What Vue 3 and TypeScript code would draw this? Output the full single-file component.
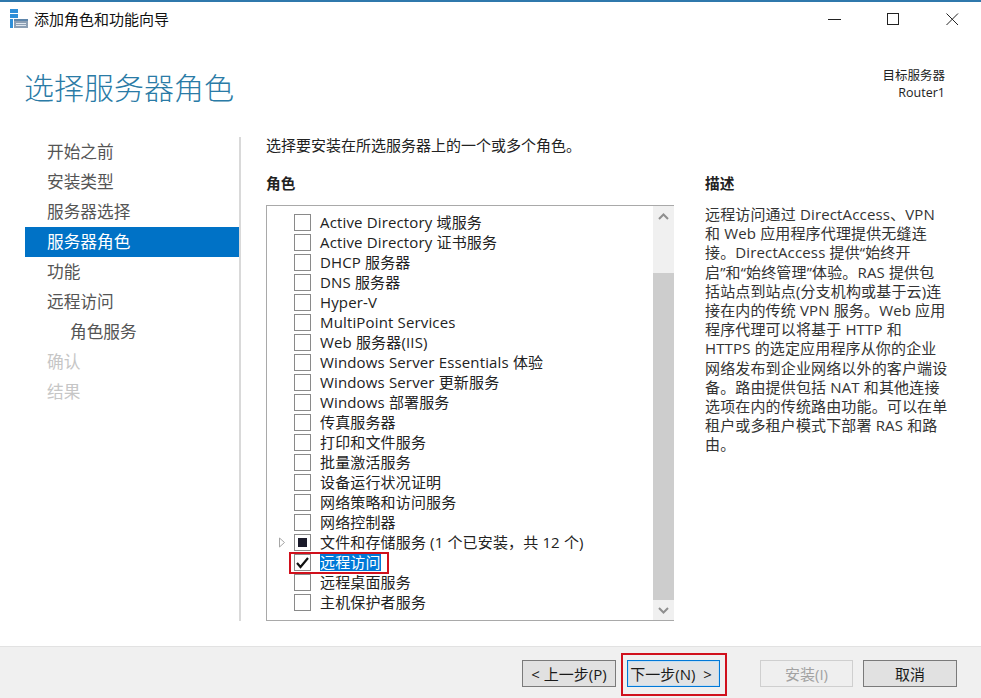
<script setup lang="ts">
interface Role { label: string; mark?: 'square' | 'check'; expand?: boolean; selected?: boolean }
const roles: Role[] = [
  { label: 'Active Directory 域服务' },
  { label: 'Active Directory 证书服务' },
  { label: 'DHCP 服务器' },
  { label: 'DNS 服务器' },
  { label: 'Hyper-V' },
  { label: 'MultiPoint Services' },
  { label: 'Web 服务器(IIS)' },
  { label: 'Windows Server Essentials 体验' },
  { label: 'Windows Server 更新服务' },
  { label: 'Windows 部署服务' },
  { label: '传真服务器' },
  { label: '打印和文件服务' },
  { label: '批量激活服务' },
  { label: '设备运行状况证明' },
  { label: '网络策略和访问服务' },
  { label: '网络控制器' },
  { label: '文件和存储服务 (1 个已安装，共 12 个)', mark: 'square', expand: true },
  { label: '远程访问', mark: 'check', selected: true },
  { label: '远程桌面服务' },
  { label: '主机保护者服务' },
]
const steps = [
  { label: '开始之前' },
  { label: '安装类型' },
  { label: '服务器选择' },
  { label: '服务器角色', active: true },
  { label: '功能' },
  { label: '远程访问' },
  { label: '角色服务', sub: true },
  { label: '确认', disabled: true },
  { label: '结果', disabled: true },
]
const description = [
  '远程访问通过 DirectAccess、VPN',
  '和 Web 应用程序代理提供无缝连',
  '接。DirectAccess 提供“始终开',
  '启”和“始终管理”体验。RAS 提供包',
  '括站点到站点(分支机构或基于云)连',
  '接在内的传统 VPN 服务。Web 应用',
  '程序代理可以将基于 HTTP 和',
  'HTTPS 的选定应用程序从你的企业',
  '网络发布到企业网络以外的客户端设',
  '备。路由提供包括 NAT 和其他连接',
  '选项在内的传统路由功能。可以在单',
  '租户或多租户模式下部署 RAS 和路',
  '由。',
]
</script>

<template>
  <div class="window">
    <div class="titlebar">
      <svg class="app-icon" width="20" height="20" viewBox="0 0 20 20">
        <rect x="1" y="0" width="8" height="4" fill="#2f8fd8" />
        <rect x="1" y="5" width="8" height="4" fill="#2f8fd8" />
        <rect x="1" y="10" width="3" height="9" fill="#2f8fd8" />
        <rect x="5" y="12" width="14" height="7" fill="#8c9fb4" />
        <rect x="5" y="10" width="14" height="2" fill="#5f86ab" />
        <rect x="7" y="14" width="10" height="1" fill="#dfe6ee" />
        <rect x="7" y="16" width="10" height="1" fill="#dfe6ee" />
      </svg>
      <span class="window-title">添加角色和功能向导</span>
      <div class="window-controls">
        <svg width="13" height="13" viewBox="0 0 13 13"><path d="M0 6.5H13" stroke="#222" fill="none" /></svg>
        <svg width="13" height="13" viewBox="0 0 13 13"><rect x="0.5" y="0.5" width="11" height="11" stroke="#222" fill="none" /></svg>
        <svg width="13" height="13" viewBox="0 0 13 13"><path d="M0.5 0.5L12 12M12 0.5L0.5 12" stroke="#222" fill="none" /></svg>
      </div>
    </div>

    <header class="header">
      <h1 class="page-title">选择服务器角色</h1>
      <div class="target">
        <div>目标服务器</div>
        <div>Router1</div>
      </div>
    </header>

    <main class="main">
      <nav class="nav">
        <div
          v-for="s in steps"
          :key="s.label + (s.sub ? 'sub' : '')"
          class="step"
          :class="{ active: s.active, sub: s.sub, disabled: s.disabled }"
        >{{ s.label }}</div>
      </nav>

      <section class="content">
        <p class="intro">选择要安装在所选服务器上的一个或多个角色。</p>
        <div class="columns">
          <div class="roles-col">
            <h2 class="col-heading">角色</h2>
            <div class="listbox">
              <div class="rows">
                <div v-for="r in roles" :key="r.label" class="row">
                  <span class="expander">
                    <svg v-if="r.expand" width="8" height="11" viewBox="0 0 8 11"><path d="M1.5 1L6.5 5.5L1.5 10Z" fill="#fff" stroke="#a6a6a6" /></svg>
                  </span>
                  <span class="box">
                    <span v-if="r.mark === 'square'" class="square"></span>
                    <svg v-if="r.mark === 'check'" width="15" height="13" viewBox="0 0 15 13"><path d="M2 7L5.5 11L13 2" fill="none" stroke="#111" stroke-width="2.2" /></svg>
                  </span>
                  <span class="role-label" :class="{ selected: r.selected }">{{ r.label }}</span>
                  <span v-if="r.selected" class="red-row"></span>
                </div>
              </div>
              <div class="scrollbar">
                <div class="scroll-top">
                  <svg width="11" height="7" viewBox="0 0 11 7"><path d="M1 6L5.5 1.5L10 6" fill="none" stroke="#8f8f8f" stroke-width="2" /></svg>
                </div>
                <div class="thumb"></div>
                <div class="scroll-bottom">
                  <svg width="11" height="7" viewBox="0 0 11 7"><path d="M1 1L5.5 5.5L10 1" fill="none" stroke="#8f8f8f" stroke-width="2" /></svg>
                </div>
              </div>
            </div>
          </div>
          <aside class="desc-col">
            <h2 class="col-heading">描述</h2>
            <div class="desc">
              <div v-for="line in description" :key="line">{{ line }}</div>
            </div>
          </aside>
        </div>
      </section>
    </main>

    <footer class="footer">
      <button class="btn">&lt; 上一步(P)</button>
      <button class="btn next">下一步(N) &nbsp;&gt;<span class="red-btn"></span></button>
      <button class="btn off">安装(I)</button>
      <button class="btn cancel">取消</button>
    </footer>
  </div>
</template>

<style>
html, body { margin: 0; background: #fff; }
</style>

<style scoped>
.window {
  width: 981px;
  height: 698px;
  display: flex;
  flex-direction: column;
  box-sizing: border-box;
  border-top: 2px solid #2f78ac;
  background: #fff;
  overflow: hidden;
  font-family: "Open Sans", "Noto Sans CJK SC", sans-serif;
  color: #1f1f1f;
}
.titlebar {
  height: 34px;
  flex: none;
  display: flex;
  align-items: center;
  padding-left: 9px;
  box-sizing: border-box;
  padding-bottom: 1px;
}
.app-icon { margin-right: 5px; flex: none; }
.window-title { font-size: 15px; color: #111; }
.window-controls {
  margin-left: auto;
  display: flex;
  gap: 46px;
  padding-right: 22px;
  padding-top: 1px;
  align-items: center;
}
.header {
  height: 101px;
  flex: none;
  display: flex;
  justify-content: space-between;
  padding: 0 36px 0 24px;
  box-sizing: border-box;
}
.page-title {
  margin: 29px 0 0;
  font-size: 30px;
  font-weight: 300;
  line-height: 46px;
  color: #2a7ba6;
}
.target {
  margin-top: 31px;
  font-size: 12.5px;
  line-height: 17px;
  text-align: right;
  color: #222;
}
.main {
  height: 484px;
  flex: none;
  display: flex;
}
.nav {
  width: 216px;
  margin-left: 25px;
  box-sizing: border-box;
  border-right: 2px solid #d9d9d9;
}
.step {
  height: 30px;
  line-height: 30px;
  font-size: 16.7px;
  padding-left: 22px;
  color: #555;
}
.step.active {
  background: #0072c6;
  color: #fff;
}
.step.sub { padding-left: 45px; }
.step.disabled { color: #c6c6c6; }
.content {
  flex: 1;
  padding-left: 25px;
  min-width: 0;
}
.intro {
  margin: 0;
  font-size: 15px;
  line-height: 16px;
  color: #222;
}
.columns {
  display: flex;
  gap: 31px;
  margin-top: 20px;
}
.roles-col { width: 408px; flex: none; }
.col-heading {
  margin: 0;
  font-size: 14.67px;
  font-weight: 700;
  line-height: 20px;
  color: #222;
}
.listbox {
  margin-top: 12px;
  height: 416px;
  box-sizing: border-box;
  border: 1px solid #a9a9a9;
  border-right: none;
  display: flex;
}
.rows {
  flex: 1;
  padding-top: 6px;
}
.row {
  position: relative;
  height: 20px;
  display: flex;
  align-items: center;
  font-size: 15px;
  letter-spacing: 0.15px;
}
.expander {
  width: 27px;
  padding-left: 11px;
  box-sizing: border-box;
  display: flex;
  flex: none;
}
.box {
  width: 17px;
  height: 17px;
  box-sizing: border-box;
  border: 1px solid #8a8a8a;
  display: flex;
  align-items: center;
  justify-content: center;
  flex: none;
  margin-right: 9px;
}
.square { width: 9px; height: 9px; background: #1a1a2a; }
.role-label {
  line-height: 18px;
  white-space: nowrap;
  color: #222;
}
.role-label.selected {
  background: #0078d7;
  color: #fff;
}
.red-row {
  position: absolute;
  left: 22px;
  top: 0;
  width: 100px;
  height: 22px;
  box-sizing: border-box;
  border: 2px solid #d0101c;
  pointer-events: none;
}
.scrollbar {
  width: 21px;
  flex: none;
  display: flex;
  flex-direction: column;
  background: #f0f0f0;
}
.scroll-top {
  height: 67px;
  flex: none;
  display: flex;
  justify-content: center;
  padding-top: 7px;
  box-sizing: border-box;
}
.thumb { flex: 1; background: #cdcdcd; }
.scroll-bottom {
  height: 20px;
  flex: none;
  display: flex;
  justify-content: center;
  align-items: center;
}
.desc-col { flex: 1; min-width: 0; }
.desc {
  margin-top: 12px;
  font-size: 15px;
  letter-spacing: 0.15px;
  line-height: 19.2px;
  white-space: nowrap;
  color: #333;
}
.footer {
  margin-top: auto;
  height: 52px;
  flex: none;
  box-sizing: border-box;
  background: #f0f0f0;
  border-top: 1px solid #e2e2e2;
  display: flex;
  align-items: flex-start;
  padding: 13px 24px 0 0;
  justify-content: flex-end;
}
.btn {
  position: relative;
  width: 94px;
  height: 27px;
  padding: 0;
  box-sizing: border-box;
  border: 1px solid #7a7a7a;
  background: #e1e1e1;
  font-family: inherit;
  font-size: 15px;
  color: #1a1a1a;
  margin-left: 10px;
}
.btn.next {
  border-color: #0078d7;
  box-shadow: inset 0 0 0 1px #c4def2;
  background: #e1e3e5;
  margin-right: 30px;
  margin-left: 11px;
  width: 93px;
  padding-right: 5px;
}
.btn.off {
  border-color: #cfcfcf;
  background: #efefef;
  color: #a2a2a2;
  width: 93px;
}
.red-btn {
  position: absolute;
  left: -7px;
  top: -8px;
  width: 106px;
  height: 43px;
  box-sizing: border-box;
  border: 2px solid #d0101c;
}
</style>
